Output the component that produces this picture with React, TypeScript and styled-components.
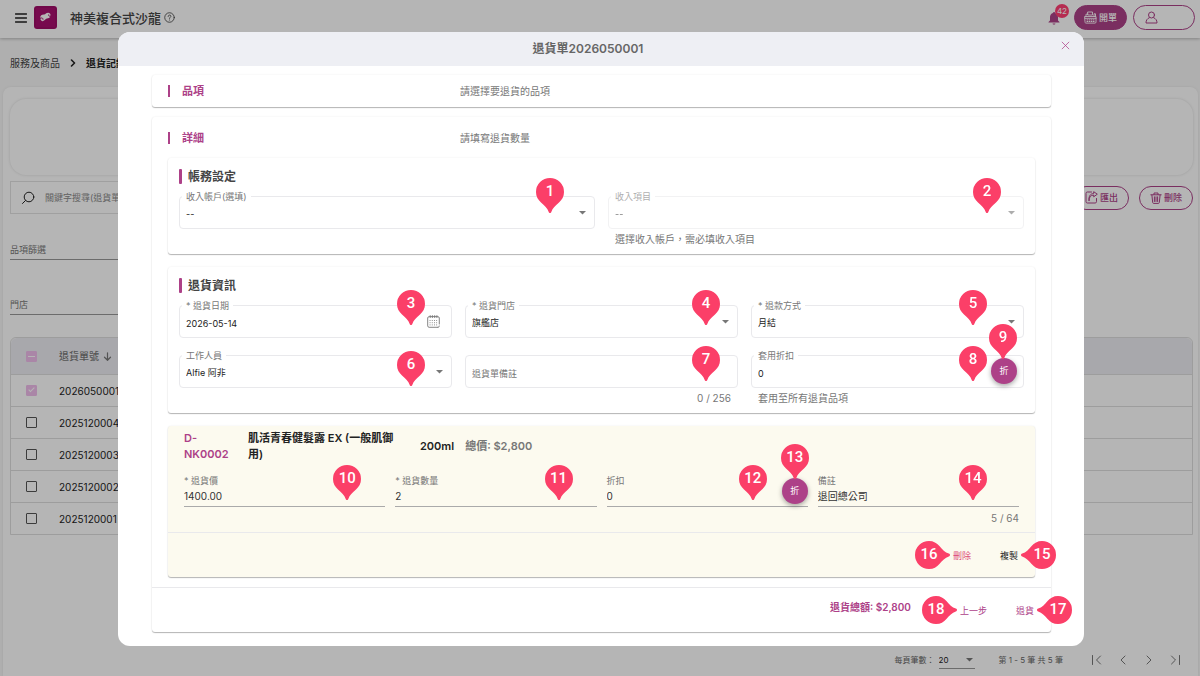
import React, { useId } from "react";
import styled, { createGlobalStyle, css } from "styled-components";

const brand = "#ad4188";
const pinRed = "#fb3f68";
const line = "#e9e9ec";
const sans = `Inter, "Noto Sans CJK TC", sans-serif`;

const GlobalStyle = createGlobalStyle`
  *, *::before, *::after { box-sizing: border-box; }
  body { margin: 0; background: #f7f7f7; color: #222; font: 10px/16px ${sans}; }
  button, input, select { font: inherit; color: inherit; margin: 0; }
  button { cursor: pointer; }
  h1, h2, h3, p { margin: 0; }
`;

/* ---------- page behind the dialog ---------- */

const Page = styled.div`
  min-height: 100vh;
  display: flex;
  flex-direction: column;
`;

const TopBar = styled.header`
  height: 38px;
  flex: none;
  display: flex;
  align-items: center;
  gap: 7px;
  padding: 0 5px 3px 15px;
  background: #fff;
  box-shadow: 0 1px 3px rgba(0, 0, 0, 0.25);
`;

const IconButton = styled.button`
  display: inline-flex;
  align-items: center;
  justify-content: center;
  position: relative;
  padding: 0;
  border: 0;
  background: none;
  color: inherit;
`;

const ShopTitle = styled.div`
  display: flex;
  align-items: center;
  gap: 3px;
  margin-left: 6px;
  color: #444;
`;

const ShopName = styled.h1`
  font-size: 13px;
  font-weight: 500;
  line-height: 20px;
`;

const TopActions = styled.div`
  margin-left: auto;
  display: flex;
  align-items: center;
  gap: 6px;
  color: ${brand};
`;

const BellButton = styled(IconButton)`
  margin-right: 8px;
`;

const Badge = styled.span`
  position: absolute;
  left: 7px;
  top: -7px;
  width: 14px;
  height: 14px;
  border-radius: 7px;
  background: #ff3f72;
  color: #fff;
  font-size: 8px;
  line-height: 14px;
  text-align: center;
`;

const Pill = styled.button<{ $filled?: boolean; $tall?: boolean }>`
  height: ${(p) => (p.$tall ? 25 : 24)}px;
  display: inline-flex;
  align-items: center;
  gap: 2px;
  padding: 0 ${(p) => (p.$tall ? 9 : 10)}px;
  border: 1px solid ${brand};
  border-radius: 13px;
  background: ${(p) => (p.$filled ? brand : "transparent")};
  color: ${(p) => (p.$filled ? "#fff" : brand)};
  font-size: 9px;
  font-weight: 500;
`;

const UserPill = styled(Pill)`
  width: 62px;
  padding: 0 11px;
`;

const Crumbs = styled.nav`
  height: 49px;
  display: flex;
  align-items: center;
  gap: 9px;
  padding: 0 10px;
  a { color: #444; text-decoration: none; }
`;

const Panel = styled.main`
  flex: 1;
  display: flex;
  flex-direction: column;
  margin: 0 2px 0 3px;
  padding: 12px 5px 6px 7px;
  border-radius: 8px 8px 0 0;
  background: #fff;
  box-shadow: 0 0 3px rgba(0, 0, 0, 0.08);
`;

const Summary = styled.section`
  height: 76px;
  flex: none;
  border-radius: 16px;
  box-shadow: 0 0 3px rgba(0, 0, 0, 0.14);
`;

const ToolRow = styled.div`
  display: flex;
  align-items: center;
  gap: 10px;
  margin-top: 6px;
`;

const SearchBox = styled.label`
  width: 360px;
  height: 33px;
  display: flex;
  align-items: center;
  gap: 10px;
  margin-right: auto;
  padding: 0 10px;
  border: 1px solid #e2e2e2;
  input {
    flex: 1;
    min-width: 0;
    border: 0;
    padding: 0;
    background: none;
    font-size: 9px;
    outline: 0;
  }
  input::placeholder { color: #8a8a8a; }
`;

const Filter = styled.label<{ $first?: boolean }>`
  display: block;
  width: 280px;
  margin-top: ${(p) => (p.$first ? 28 : 37)}px;
  font-size: 9px;
  color: #777;
  select {
    display: block;
    width: 100%;
    height: 2px;
    padding: 0;
    border: 0;
    border-bottom: 1px solid #999;
    appearance: none;
    background: none;
  }
`;

const Grid = styled.table`
  width: 100%;
  margin-top: 22px;
  border-collapse: separate;
  border-spacing: 0;
  border: 1px solid #ddd;
  border-radius: 6px 6px 0 0;
  color: #222;
  th { height: 36px; padding: 0; text-align: left; font-weight: 500; background: #ededf3; color: #777; }
  td { height: 32px; padding: 0; font-size: 10px; border-top: 1px solid #ddd; }
  th:first-child, td:first-child { width: 48px; padding-left: 15px; }
  th:first-child { border-radius: 6px 0 0 0; }
  th:last-child { border-radius: 0 6px 0 0; }
`;

const HeadLabel = styled.span`
  display: inline-flex;
  align-items: center;
  gap: 4px;
`;

const Tick = styled.input<{ $mixed?: boolean }>`
  appearance: none;
  display: block;
  width: 11px;
  height: 11px;
  border: 1px solid #555;
  border-radius: 1px;
  &:checked { border-color: #f0bdec; background: #f0bdec; }
  &:checked::after {
    content: "";
    display: block;
    ${(p) =>
      p.$mixed
        ? css`width: 7px; height: 1px; margin: 4px 1px; background: #fff;`
        : css`width: 3px; height: 6px; margin: 0 3px; border: solid #fff; border-width: 0 1px 1px 0; transform: rotate(45deg);`}
  }
`;

const Pager = styled.div`
  margin-top: auto;
  height: 20px;
  display: flex;
  align-items: center;
  justify-content: flex-end;
  gap: 24px;
  padding-right: 12px;
  font-size: 8px;
  color: #666;
  label { display: flex; align-items: center; gap: 4px; }
`;

const PageSize = styled.span`
  position: relative;
  display: flex;
  width: 36px;
  border-bottom: 1px solid #999;
  svg { position: absolute; right: 2px; top: 6px; }
  select { width: 100%; padding: 0; border: 0; appearance: none; background: none; color: #222; }
`;

const PageButtons = styled.div`
  display: flex;
  gap: 14px;
  margin-left: 4px;
  color: #777;
`;

/* ---------- dialog ---------- */

const Overlay = styled.div`
  position: fixed;
  inset: 0;
  overflow: auto;
  padding: 32px 116px 30px 118px;
  background: rgba(0, 0, 0, 0.29);
`;

const Dialog = styled.section`
  border-radius: 12px;
  background: #fff;
`;

const DialogHead = styled.header`
  height: 34px;
  display: flex;
  align-items: center;
  padding-right: 12px;
  border-radius: 12px 12px 0 0;
  background: #eeeff4;
  h2 {
    flex: 1;
    text-align: center;
    font-size: 12px;
    font-weight: 600;
    color: #666;
  }
`;

const CloseButton = styled(IconButton)`
  width: 14px;
  height: 14px;
  align-self: flex-start;
  margin-top: 6px;
  color: ${brand};
`;

const DialogBody = styled.div`
  display: flex;
  flex-direction: column;
  gap: 10px;
  padding: 9px 33px 14px 34px;
`;

const cardShadow = css`
  border-radius: 3px;
  box-shadow: 0 1px 1px rgba(0, 0, 0, 0.28), 0 0 2px rgba(0, 0, 0, 0.08);
`;

const Step = styled.section`
  ${cardShadow}
  background: #fff;
`;

const StepHead = styled.div<{ $open?: boolean }>`
  display: grid;
  grid-template-columns: 292px 1fr;
  align-items: center;
  padding: ${(p) => (p.$open ? "13px 16px 12px" : "8px 16px")};
  p { color: #777; }
`;

const StepTitle = styled.h3`
  display: flex;
  align-items: center;
  gap: 12px;
  font-size: 11px;
  font-weight: 700;
  color: ${brand};
  &::before { content: ""; width: 2px; height: 12px; background: ${brand}; }
`;

const Cards = styled.div`
  display: flex;
  flex-direction: column;
  gap: 13px;
  padding: 0 16px 10px;
`;

const Card = styled.section`
  ${cardShadow}
  padding: 10px 11px 9px;
`;

const CardTitle = styled.h3`
  display: flex;
  align-items: center;
  gap: 6px;
  margin-bottom: 11px;
  font-size: 12px;
  line-height: 17px;
  font-weight: 700;
  color: #444;
  &::before { content: ""; width: 3px; height: 15px; border-radius: 1px; background: ${brand}; }
`;

const Fields = styled.div<{ $cols: number }>`
  display: grid;
  grid-template-columns: repeat(${(p) => p.$cols}, minmax(0, 1fr));
  gap: 17px 13px;
`;

const FieldCell = styled.div<{ $disabled?: boolean }>`
  position: relative;
  opacity: ${(p) => (p.$disabled ? 0.6 : 1)};
`;

const Outline = styled.div<{ $date?: boolean }>`
  height: 33px;
  display: flex;
  align-items: center;
  padding: 0 ${(p) => (p.$date ? 11 : 8)}px 0 6px;
  border: 1px solid ${line};
  border-radius: 4px;
  color: #777;
  input, select {
    flex: 1;
    min-width: 0;
    height: 31px;
    padding: 3px 0 0;
    border: 0;
    outline: 0;
    appearance: none;
    background: none;
    font-size: 9px;
    color: #222;
    opacity: 1;
  }
  input::placeholder { color: #777; }
`;

const FloatLabel = styled.label`
  position: absolute;
  left: 3px;
  top: -5px;
  padding: 0 4px;
  background: #fff;
  font-size: 9px;
  line-height: 12px;
  color: #777;
`;

const Hint = styled.p<{ $end?: boolean }>`
  margin-top: 4px;
  padding: 0 7px;
  line-height: 12px;
  text-align: ${(p) => (p.$end ? "right" : "left")};
  color: #777;
`;

const RoundButton = styled.button<{ $inset: number }>`
  position: absolute;
  right: ${(p) => p.$inset}px;
  top: 3px;
  width: 26px;
  height: 26px;
  padding: 0;
  border: 0;
  border-radius: 50%;
  background: ${brand};
  box-shadow: 0 2px 5px rgba(0, 0, 0, 0.35);
  color: #fff;
  font-size: 9px;
`;

const ItemCard = styled.section`
  ${cardShadow}
  background: #fcfaef;
`;

const ItemHead = styled.div`
  display: flex;
  align-items: center;
  gap: 11px;
  padding: 4px 16px 0;
  font-size: 11px;
  font-weight: 600;
  color: #222;
`;

const ItemCode = styled.span`
  width: 53px;
  color: ${brand};
`;

const ItemName = styled.span`
  width: 161px;
  padding-right: 5px;
`;

const ItemTotal = styled.span`
  color: #777;
`;

const ItemFields = styled.div`
  display: grid;
  grid-template-columns: repeat(4, minmax(0, 1fr));
  gap: 10px;
  padding: 13px 16px 8px;
  border-bottom: 1px solid ${line};
`;

const LineField = styled.div`
  position: relative;
  label { display: block; font-size: 9px; line-height: 12px; color: #777; }
  input {
    display: block;
    width: 100%;
    height: 20px;
    padding: 0 0 2px;
    border: 0;
    border-bottom: 1px solid #aaa;
    outline: 0;
    background: none;
    color: #333;
  }
  p { margin-top: 5px; line-height: 12px; text-align: right; color: #777; }
`;

const Actions = styled.div`
  height: 44px;
  display: flex;
  align-items: center;
  justify-content: flex-end;
  gap: 21px;
  padding-right: 13px;
`;

const StepFooter = styled(Actions)`
  height: 45px;
  border-top: 1px solid ${line};
`;

const ActionSlot = styled.div`
  position: relative;
`;

const TextButton = styled.button<{ $color: string }>`
  padding: 0 4px;
  border: 0;
  background: none;
  font-size: 9px;
  color: ${(p) => p.$color};
`;

const GrandTotal = styled.strong`
  margin: 0 24px 6px 0;
  font-size: 10px;
  font-weight: 600;
  color: ${brand};
`;

/* ---------- numbered guide pins ---------- */

type PinDir = "down" | "left" | "right";

const PinMark = styled.span<{ $x: number; $y: number }>`
  position: absolute;
  z-index: 2;
  right: ${(p) => p.$x}px;
  top: ${(p) => p.$y}px;
  width: 28px;
  height: 35px;
`;

const SidePin = styled.span<{ $dir: PinDir }>`
  position: absolute;
  z-index: 2;
  top: 50%;
  ${(p) => (p.$dir === "left" ? "left" : "right")}: calc(100% - 1px);
  width: 35px;
  height: 28px;
  margin-top: -14px;
`;

const PinNumber = styled.b<{ $dir: PinDir }>`
  position: absolute;
  top: 0;
  ${(p) => (p.$dir === "left" ? "right" : "left")}: 0;
  width: 28px;
  color: #fff;
  font: 500 15px/27px Roboto, sans-serif;
  text-align: center;
`;

const PinSvg = styled.svg`
  display: block;
`;

const PinShape = ({ dir }: { dir: PinDir }) => {
  const flat = dir !== "down";
  const turn = dir === "left" ? "translate(35 0) rotate(90)" : dir === "right" ? "translate(0 28) rotate(-90)" : undefined;
  return (
    <PinSvg width={flat ? 35 : 28} height={flat ? 28 : 35} aria-hidden="true">
      <path
        transform={turn}
        fill={pinRed}
        d="M14 0a14 14 0 0 1 14 14c0 4.600-2 7.800-5 10.400-3.400 3-6.600 5.600-7.600 9.400-.4 1.600-2.400 1.600-2.800 0-1-3.800-4.200-6.400-7.600-9.400C2 21.800 0 18.600 0 14A14 14 0 0 1 14 0z"
      />
    </PinSvg>
  );
};

const Pin = ({ n, x, y }: { n: number; x: number; y: number }) => (
  <PinMark $x={x} $y={y}>
    <PinShape dir="down" />
    <PinNumber $dir="down">{n}</PinNumber>
  </PinMark>
);

const ArrowPin = ({ n, dir }: { n: number; dir: PinDir }) => (
  <SidePin $dir={dir}>
    <PinShape dir={dir} />
    <PinNumber $dir={dir}>{n}</PinNumber>
  </SidePin>
);

/* ---------- icons ---------- */

type IconProps = { size?: number; box?: number; w?: number; children: React.ReactNode };
const Icon = ({ size = 12, box = 12, w = 1, children }: IconProps) => (
  <svg width={size} height={size} viewBox={`0 0 ${box} ${box}`} fill="none" stroke="currentColor" strokeWidth={w} strokeLinecap="round" strokeLinejoin="round" aria-hidden="true">
    {children}
  </svg>
);

const Caret = () => (
  <svg width="7" height="4" viewBox="0 0 7 4" aria-hidden="true">
    <path d="M0 0h7L3.500 3.600z" fill="#777" />
  </svg>
);

const Logo = () => (
  <svg width="23" height="23" viewBox="0 0 23 23" aria-hidden="true">
    <rect width="23" height="23" rx="3" fill="#a80f6e" />
    <rect x="1" y="1" width="21" height="21" rx="2" fill="none" stroke="#8a0b58" strokeOpacity=".5" />
    <path d="M6.200 11.600c0-2.300 1.900-3.200 3.700-3.100 1.700.1 2.100-1.700 4.300-1.700 1.300 0 2.300.9 2.300 2.300 0 2.600-1.900 3.400-3.600 3.400-1.700.1-1.800 2.300-4.300 2.700-1.400.1-2.400-1.400-2.400-3.600z" fill="#fff" />
    <path d="M6 12.300c2-.8 3.100-.2 3 1.400M17 10.200c-1.600.5-2.600-.3-2.400-1.700" stroke="#a80f6e" strokeWidth="1" fill="none" />
  </svg>
);

const CalendarIcon = () => (
  <Icon size={13} box={13} w={0.9}>
    <path d="M12.300 9V3c0-.8-.6-1.400-1.400-1.400H2.100C1.300 1.600.7 2.200.7 3v7.900c0 .8.600 1.400 1.400 1.400h8.800M3.200.6v2M5.400.6v2M7.700.6v2M9.900.6v2M11 12.300c.8 0 1.300-.5 1.300-1.300" />
    <path d="M3 5.500h7.500M3 7.700h7.500M3 9.900h7.500" strokeDasharray=".1 2.100" strokeWidth=".9" />
  </Icon>
);

const RegisterIcon = () => (
  <Icon size={13} box={13} w={0.9}>
    <path d="M1 5.500h11v5.600c0 .6-.4 1-1 1H2c-.6 0-1-.4-1-1zM2 5.500V3.200h2M4 1h4.500v3H4zM10 5.500V2.800h1.500v2.700M1 7.300h11" />
    <path d="M3 8.900h7.500M3 10.500h7.500" strokeDasharray=".8 1.300" strokeWidth="1" />
  </Icon>
);

const ExportIcon = () => (
  <Icon size={13} box={13} w={1}>
    <path d="M6.500 1H2.300C1.500 1 1 1.500 1 2.300v8.400c0 .8.500 1.300 1.300 1.300h7.900c.8 0 1.300-.5 1.300-1.300V7.500M4 9.500c0-3.500 1.700-5.300 4.700-5.500V5.800L12.300 3.200 8.700.7v1.700C5 2.800 3.600 5.500 4 9.500z" />
  </Icon>
);

const TrashIcon = () => (
  <Icon size={12} box={12} w={1}>
    <path d="M.8 2.800h10.400M4 2.600V1h4v1.600M1.900 3l.8 7.600c.1.500.4.800.9.800h4.800c.5 0 .8-.3.9-.8L10.100 3M4.400 4.800v4.700M6 4.800v4.700M7.600 4.800v4.700" />
  </Icon>
);

/* ---------- fields ---------- */

type FieldProps = {
  label?: string;
  value?: string;
  kind?: "select" | "text" | "date";
  disabled?: boolean;
  placeholder?: string;
  hint?: string;
  count?: boolean;
  children?: React.ReactNode;
};

const Field = ({ label, value = "", kind = "text", disabled, placeholder, hint, count, children }: FieldProps) => {
  const id = useId();
  return (
    <div>
      <FieldCell>
        <FieldCell $disabled={disabled}>
          <Outline $date={kind === "date"}>
            {kind === "select" ? (
              <>
                <select id={id} disabled={disabled} defaultValue={value}>
                  <option>{value}</option>
                </select>
                <Caret />
              </>
            ) : (
              <input id={id} defaultValue={value} placeholder={placeholder} aria-label={placeholder} />
            )}
            {kind === "date" && (
              <IconButton type="button" aria-label="選擇日期">
                <CalendarIcon />
              </IconButton>
            )}
          </Outline>
          {label && <FloatLabel htmlFor={id}>{label}</FloatLabel>}
        </FieldCell>
        {children}
      </FieldCell>
      {hint && <Hint $end={count}>{hint}</Hint>}
    </div>
  );
};

const ItemField = ({ label, value, count, children }: { label: string; value: string; count?: string; children?: React.ReactNode }) => {
  const id = useId();
  return (
    <LineField>
      <label htmlFor={id}>{label}</label>
      <input id={id} defaultValue={value} />
      {count && <p>{count}</p>}
      {children}
    </LineField>
  );
};

const orders = ["2026050001", "2025120004", "2025120003", "2025120002", "2025120001"];

export default function App() {
  return (
    <>
      <GlobalStyle />
      <Page>
        <TopBar>
          <IconButton type="button" aria-label="選單">
            <Icon w={1.5}><path d="M.5 2h11M.5 6h11M.5 10h11" /></Icon>
          </IconButton>
          <Logo />
          <ShopTitle>
            <ShopName>神美複合式沙龍</ShopName>
            <IconButton type="button" aria-label="說明">
              <Icon size={11} w={0.9}>
                <circle cx="6" cy="6" r="5.200" />
                <path d="M4.500 4.800c0-2 3-1.900 3-.2C7.500 5.800 6 5.700 6 7M6 8.700v.1" />
              </Icon>
            </IconButton>
          </ShopTitle>
          <TopActions>
            <BellButton type="button" aria-label="通知">
              <svg width="12" height="14" viewBox="0 0 12 14" fill="currentColor" aria-hidden="true">
                <path d="M6 1c.6 0 1 .4 1 .9C8.800 2.400 10 4 10 6v3.500l1.500 1.500v.6H.5V11L2 9.500V6c0-2 1.200-3.600 3-4.100 0-.5.400-.9 1-.9zM4.600 12.400h2.800c0 1.600-2.800 1.600-2.800 0z" />
              </svg>
              <Badge>42</Badge>
            </BellButton>
            <Pill type="button" $filled $tall><RegisterIcon />開單</Pill>
            <UserPill type="button" $tall aria-label="帳號">
              <Icon size={13} box={13}>
                <circle cx="6.500" cy="4" r="3" />
                <path d="M4.300 6.700C2.200 7.600 1 9.300 1 12h11c0-2.700-1.200-4.400-3.300-5.300" />
              </Icon>
            </UserPill>
          </TopActions>
        </TopBar>

        <Crumbs>
          <a href="#services">服務及商品</a>
          <Icon size={8} box={8} w={1.6}><path d="M2.500 1l3 3-3 3" /></Icon>
          <strong>退貨記錄</strong>
        </Crumbs>

        <Panel>
          <Summary />
          <ToolRow>
            <SearchBox>
              <Icon size={14} box={14}>
                <circle cx="8" cy="6" r="4.800" />
                <path d="M4.500 9.500L1.500 12.500" />
              </Icon>
              <input placeholder="關鍵字搜尋(退貨單號)" aria-label="關鍵字搜尋" />
            </SearchBox>
            <Pill type="button"><ExportIcon />匯出</Pill>
            <Pill type="button"><TrashIcon />刪除</Pill>
          </ToolRow>
          <Filter $first>品項篩選<select /></Filter>
          <Filter>門店<select /></Filter>
          <Grid>
            <thead>
              <tr>
                <th><Tick type="checkbox" $mixed defaultChecked aria-label="全選" /></th>
                <th>
                  <HeadLabel>
                    退貨單號
                    <Icon size={9} w={1.6}><path d="M6 1v9.500M2 7l4 4 4-4" /></Icon>
                  </HeadLabel>
                </th>
              </tr>
            </thead>
            <tbody>
              {orders.map((no, i) => (
                <tr key={no}>
                  <td><Tick type="checkbox" defaultChecked={i === 0} aria-label={no} /></td>
                  <td>{no}</td>
                </tr>
              ))}
            </tbody>
          </Grid>
          <Pager>
            <label>
              每頁筆數：
              <PageSize>
                <select defaultValue="20"><option>20</option></select>
                <Caret />
              </PageSize>
            </label>
            <span>第 1 - 5 筆 共 5 筆</span>
            <PageButtons>
              <IconButton type="button" aria-label="第一頁"><Icon><path d="M1.500 1.500v9M9.500 2l-4 4 4 4" /></Icon></IconButton>
              <IconButton type="button" aria-label="上一頁"><Icon><path d="M8 2L4 6l4 4" /></Icon></IconButton>
              <IconButton type="button" aria-label="下一頁"><Icon><path d="M4 2l4 4-4 4" /></Icon></IconButton>
              <IconButton type="button" aria-label="最後一頁"><Icon><path d="M10.500 1.500v9M2.500 2l4 4-4 4" /></Icon></IconButton>
            </PageButtons>
          </Pager>
        </Panel>
      </Page>

      <Overlay>
        <Dialog role="dialog" aria-labelledby="dialog-title">
          <DialogHead>
            <h2 id="dialog-title">退貨單2026050001</h2>
            <CloseButton type="button" aria-label="關閉">
              <Icon size={9} w={1}><path d="M1.500 1.500l9 9M10.500 1.500l-9 9" /></Icon>
            </CloseButton>
          </DialogHead>
          <DialogBody>
            <Step>
              <StepHead>
                <StepTitle>品項</StepTitle>
                <p>請選擇要退貨的品項</p>
              </StepHead>
            </Step>
            <Step>
              <StepHead $open>
                <StepTitle>詳細</StepTitle>
                <p>請填寫退貨數量</p>
              </StepHead>
              <Cards>
                <Card>
                  <CardTitle>帳務設定</CardTitle>
                  <Fields $cols={2}>
                    <Field label="收入帳戶(選填)" value="--" kind="select">
                      <Pin n={1} x={31} y={-18} />
                    </Field>
                    <Field label="收入項目" value="--" kind="select" disabled hint="選擇收入帳戶，需必填收入項目">
                      <Pin n={2} x={23} y={-18} />
                    </Field>
                  </Fields>
                </Card>

                <Card>
                  <CardTitle>退貨資訊</CardTitle>
                  <Fields $cols={3}>
                    <Field label="* 退貨日期" value="2026-05-14" kind="date"><Pin n={3} x={27} y={-15} /></Field>
                    <Field label="* 退貨門店" value="旗艦店" kind="select"><Pin n={4} x={18} y={-15} /></Field>
                    <Field label="* 退款方式" value="月結" kind="select"><Pin n={5} x={37} y={-15} /></Field>
                    <Field label="工作人員" value="Alfie 阿非" kind="select"><Pin n={6} x={27} y={-4} /></Field>
                    <Field placeholder="退貨單備註" hint="0 / 256" count><Pin n={7} x={18} y={-9} /></Field>
                    <Field label="套用折扣" value="0" hint="套用至所有退貨品項">
                      <RoundButton type="button" $inset={7}>折</RoundButton>
                      <Pin n={8} x={37} y={-9} />
                      <Pin n={9} x={7} y={-31} />
                    </Field>
                  </Fields>
                </Card>

                <ItemCard>
                  <ItemHead>
                    <ItemCode>D-NK0002</ItemCode>
                    <ItemName>肌活青春健髮露 EX (一般肌御用)</ItemName>
                    <span>200ml</span>
                    <ItemTotal>總價: $2,800</ItemTotal>
                  </ItemHead>
                  <ItemFields>
                    <ItemField label="* 退貨價" value="1400.00"><Pin n={10} x={24} y={-10} /></ItemField>
                    <ItemField label="* 退貨數量" value="2"><Pin n={11} x={24} y={-10} /></ItemField>
                    <ItemField label="折扣" value="0">
                      <RoundButton type="button" $inset={0}>折</RoundButton>
                      <Pin n={12} x={41} y={-10} />
                      <Pin n={13} x={-1} y={-31} />
                    </ItemField>
                    <ItemField label="備註" value="退回總公司" count="5 / 64"><Pin n={14} x={32} y={-10} /></ItemField>
                  </ItemFields>
                  <Actions>
                    <ActionSlot>
                      <TextButton type="button" $color="#dc4b78">刪除</TextButton>
                      <ArrowPin n={16} dir="right" />
                    </ActionSlot>
                    <ActionSlot>
                      <TextButton type="button" $color="#222">複製</TextButton>
                      <ArrowPin n={15} dir="left" />
                    </ActionSlot>
                  </Actions>
                </ItemCard>
              </Cards>
              <StepFooter>
                <GrandTotal>退貨總額: $2,800</GrandTotal>
                <ActionSlot>
                  <TextButton type="button" $color={brand}>上一步</TextButton>
                  <ArrowPin n={18} dir="right" />
                </ActionSlot>
                <ActionSlot>
                  <TextButton type="button" $color={brand}>退貨</TextButton>
                  <ArrowPin n={17} dir="left" />
                </ActionSlot>
              </StepFooter>
            </Step>
          </DialogBody>
        </Dialog>
      </Overlay>
    </>
  );
}
